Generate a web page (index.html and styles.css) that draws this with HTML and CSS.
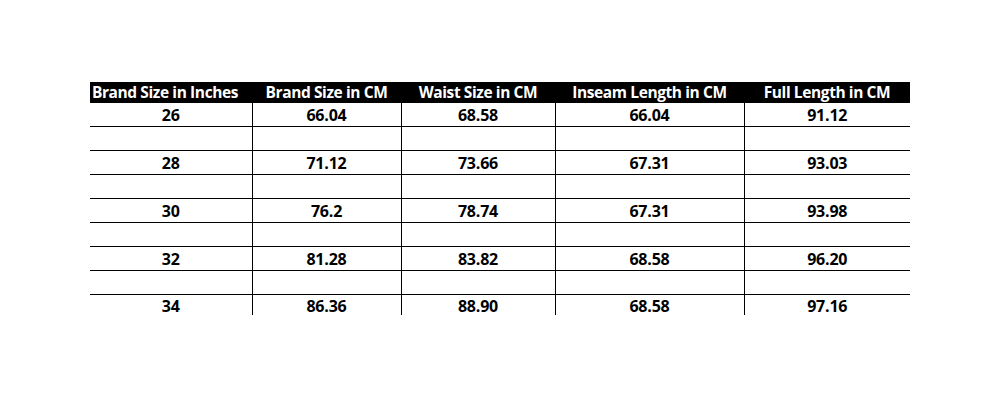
FILE: index.html
```html
<!DOCTYPE html>
<html>
<head>
<meta charset="utf-8">
<link rel="stylesheet" href="styles.css">
</head>
<body>
<div class="page">
<table class="sizes">
<colgroup>
<col class="c1"><col class="c2"><col class="c3"><col class="c4"><col class="c5">
</colgroup>
<thead>
<tr><th class="first">Brand Size in Inches</th><th>Brand Size in CM</th><th>Waist Size in CM</th><th>Inseam Length in CM</th><th>Full Length in CM</th></tr>
</thead>
<tbody>
<tr><td>26</td><td>66.04</td><td>68.58</td><td>66.04</td><td>91.12</td></tr>
<tr><td></td><td></td><td></td><td></td><td></td></tr>
<tr><td>28</td><td>71.12</td><td>73.66</td><td>67.31</td><td>93.03</td></tr>
<tr><td></td><td></td><td></td><td></td><td></td></tr>
<tr><td>30</td><td>76.2</td><td>78.74</td><td>67.31</td><td>93.98</td></tr>
<tr><td></td><td></td><td></td><td></td><td></td></tr>
<tr><td>32</td><td>81.28</td><td>83.82</td><td>68.58</td><td>96.20</td></tr>
<tr><td></td><td></td><td></td><td></td><td></td></tr>
<tr class="last"><td>34</td><td>86.36</td><td>88.90</td><td>68.58</td><td>97.16</td></tr>
</tbody>
</table>
</div>
</body>
</html>
```

FILE: styles.css
```css
html, body {
  margin: 0;
  padding: 0;
  background: #fff;
}
.page {
  padding: 82px 0 0 90px;
}
.sizes {
  border-collapse: collapse;
  table-layout: fixed;
  width: 820px;
  font-family: "Open Sans", "Liberation Sans", Arial, sans-serif;
  font-weight: bold;
  font-size: 16px;
  color: #000;
}
.c1 { width: 162px; }
.c2 { width: 149px; }
.c3 { width: 154px; }
.c4 { width: 189px; }
.c5 { width: 166px; }
.sizes th {
  background: #000;
  color: #fff;
  height: 21px;
  padding: 0;
  text-align: center;
  white-space: nowrap;
  font-weight: bold;
  font-size: 15.5px;
  line-height: 21px;
  letter-spacing: -0.4px;
}
.sizes th.first {
  padding-right: 12px;
}
.sizes td {
  height: 21px;
  padding: 2px 0 0;
  text-align: center;
  border-bottom: 1px solid #000;
  line-height: 21px;
  letter-spacing: -0.2px;
}
.sizes td + td {
  border-left: 1px solid #000;
}
.sizes tr.last td {
  border-bottom: none;
  height: 18px;
  padding: 2px 0 0;
  line-height: 18px;
  vertical-align: top;
}
```
